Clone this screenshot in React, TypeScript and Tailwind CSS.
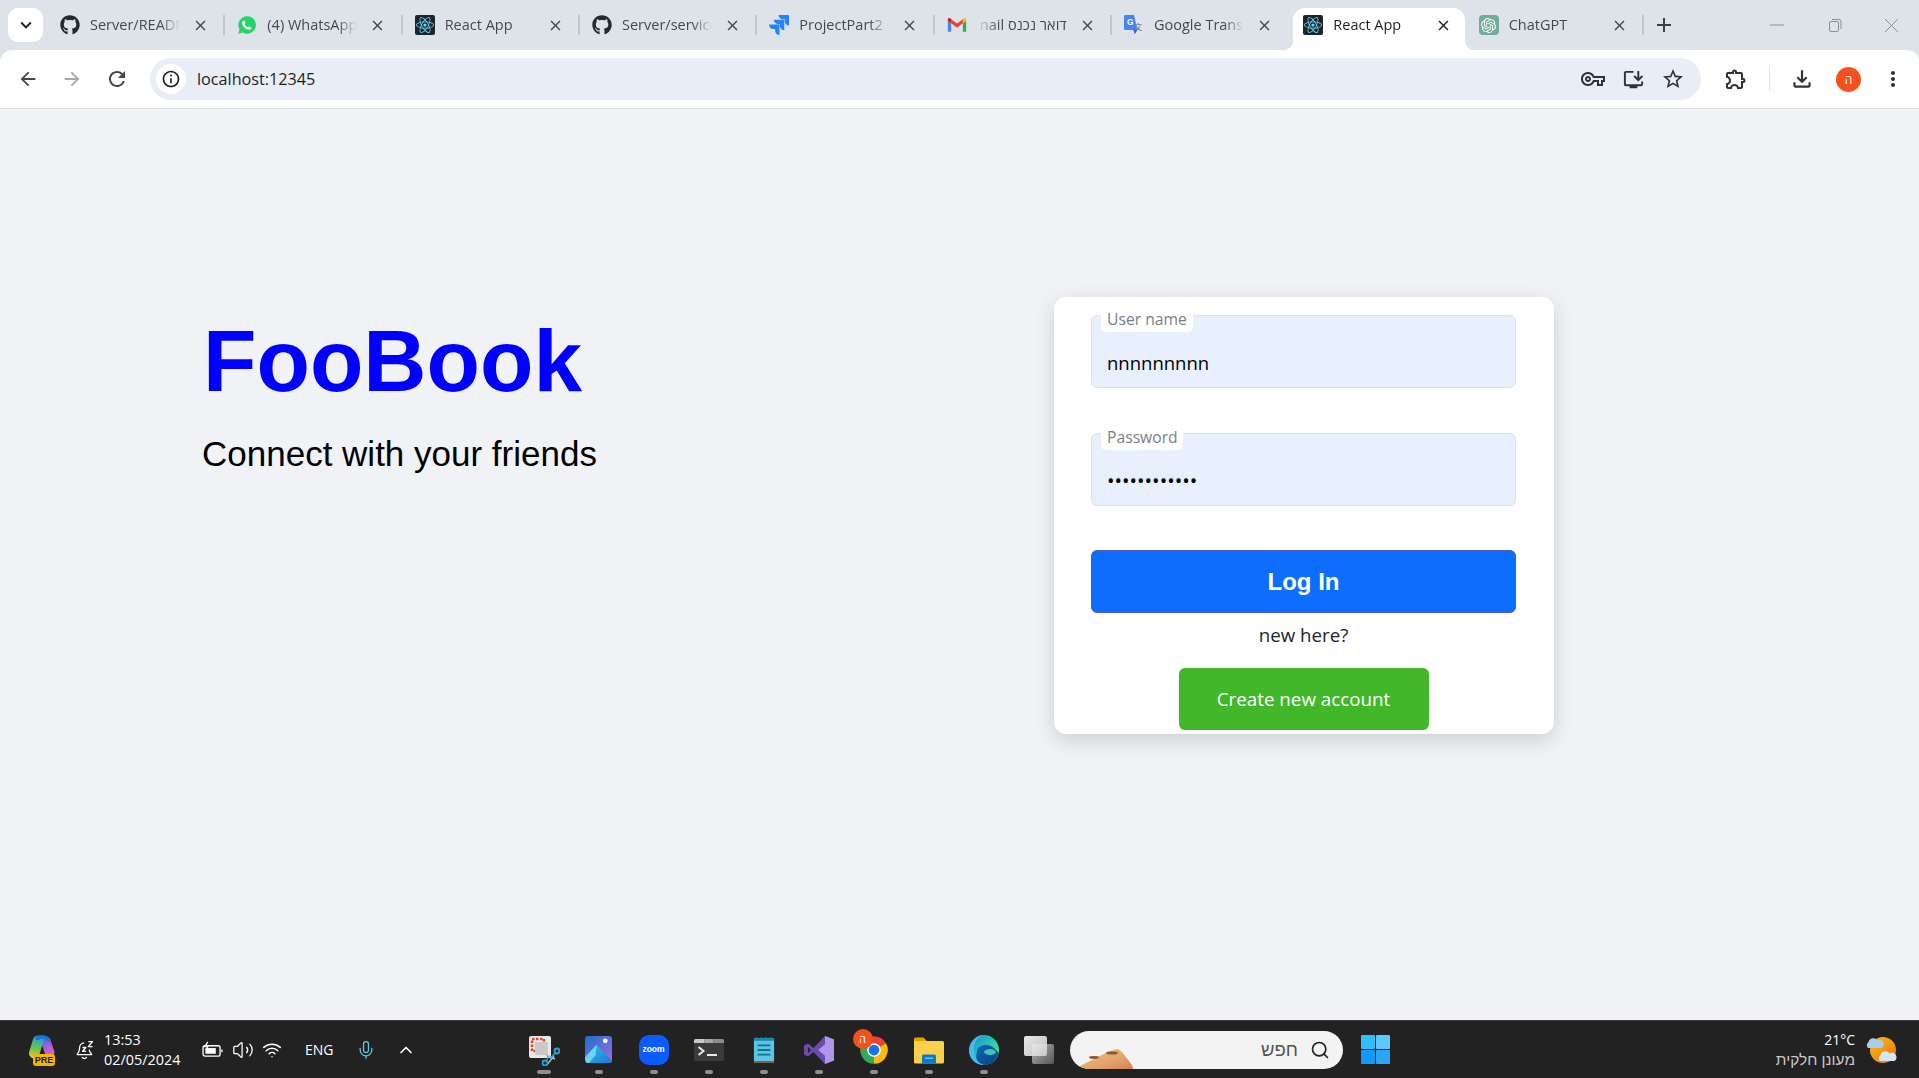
import React from "react";
import { FaGithub, FaReact } from "react-icons/fa";
import { SiJira, SiOpenai } from "react-icons/si";
import {
  MdAdd, MdArrowBack, MdArrowForward, MdClose, MdExpandMore, MdInfoOutline, MdMoreVert, MdOutlineExtension,
  MdOutlineFileDownload, MdOutlineInstallDesktop, MdOutlineVpnKey, MdRefresh, MdStarBorder,
} from "react-icons/md";
import { ChevronUp, Mic, Search, Volume2, Wifi } from "lucide-react";

const Whatsapp = () => (
  <svg viewBox="0 0 24 24" className="w-5 h-5">
    <path fill="#25d366" d="M12 1.5a10.5 10.5 0 0 0-9 15.8L1.5 22.5l5.4-1.4A10.5 10.5 0 1 0 12 1.5z" />
    <path fill="#fff" d="M9 6.7l1.3 3-1.2 1.4c.9 1.7 2.2 3 4 3.9l1.4-1.2 2.9 1.3c0 1.9-1.4 2.8-2.9 2.6-4.4-.5-7.9-4-8.3-8.1C6.100 8 7.200 6.600 9 6.700z" />
  </svg>
);
const ReactFav = () => (
  <div className="w-5 h-5 rounded-[2px] bg-[#20232a] flex items-center justify-center">
    <FaReact className="text-[#61dafb]" size={18} />
  </div>
);
const Gmail = () => (
  <svg viewBox="0 0 24 24" className="w-5 h-5">
    <path fill="#4285f4" d="M1 20h4V10L1 7z" />
    <path fill="#34a853" d="M19 20h4V7l-4 3z" />
    <path fill="#fbbc04" d="M19 5v5l4-3V5.500C23 3.500 20.500 3 19 5z" />
    <path fill="#ea4335" d="M5 10V5l7 5.250L19 5v5l-7 5.250z" />
    <path fill="#c5221f" d="M5 5v5L1 7V5.500C1 3.500 3.500 3 5 5z" />
  </svg>
);
const Translate = () => (
  <svg viewBox="0 0 24 24" className="w-5 h-5">
    <rect x="9" y="6" width="15" height="16" rx="1" fill="#e4e6ea" />
    <text x="12" y="18" fontSize="10" fill="#666" fontFamily="'Noto Sans CJK SC',sans-serif">文</text>
    <path fill="#4285f4" d="M1.500 0H12l4 18H1.500A1.500 1.500 0 0 1 0 16.500v-15A1.500 1.500 0 0 1 1.500 0z" />
    <path fill="#3367d6" d="M11 18l2 5 3-5z" />
    <text x="3.500" y="12.500" fontSize="10" fontWeight="700" fill="#fff" fontFamily="'Liberation Sans',sans-serif">G</text>
  </svg>
);
const ChatFav = () => (
  <div className="w-5 h-5 rounded-[4px] bg-[#74aa9c] flex items-center justify-center">
    <SiOpenai className="text-white" size={15} />
  </div>
);

const tabs: { icon: React.ReactNode; title: string; rtl?: boolean; active?: boolean; noSep?: boolean }[] = [
  { icon: <FaGithub className="text-[#24292f]" size={20} />, title: "Server/README.md at main" },
  { icon: <Whatsapp />, title: "(4) WhatsApp Web" },
  { icon: <ReactFav />, title: "React App" },
  { icon: <FaGithub className="text-[#24292f]" size={20} />, title: "Server/services/users" },
  { icon: <SiJira className="text-[#2684ff]" size={20} />, title: "ProjectPart2 - Jira" },
  { icon: <Gmail />, title: "דואר נכנס nail", rtl: true },
  { icon: <Translate />, title: "Google Translate", noSep: true },
  { icon: <ReactFav />, title: "React App", active: true, noSep: true },
  { icon: <ChatFav />, title: "ChatGPT" },
];

function Tab({ icon, title, rtl, active, noSep }: (typeof tabs)[number]) {
  return (
    <div className="relative w-[177.33px] h-full flex items-center shrink-0">
      {active && (
        <>
          <div className="absolute left-[5px] right-[1px] top-[8px] bottom-0 bg-white rounded-t-[12px]" />
          <div className="absolute left-[-5px] bottom-0 w-[10px] h-[10px] bg-[radial-gradient(circle_at_0_0,transparent_10px,white_10.5px)]" />
          <div className="absolute right-[-9px] bottom-0 w-[10px] h-[10px] bg-[radial-gradient(circle_at_100%_0,transparent_10px,white_10.5px)]" />
        </>
      )}
      <div className={`relative flex items-center w-full ${active ? "pl-[15px]" : "pl-[13px]"}`}>
        <div className="w-5 h-5 flex items-center justify-center shrink-0">{icon}</div>
        <div
          dir={rtl ? "rtl" : "ltr"}
          className={`ml-[10px] w-[90px] overflow-hidden whitespace-nowrap text-[14.5px] leading-5 ${active ? "text-[#1f1f1f]" : "text-[#45494e]"} ${rtl ? "[mask-image:linear-gradient(to_left,black_75%,transparent)]" : "[mask-image:linear-gradient(to_right,black_78%,transparent)]"}`}
        >
          {title}
        </div>
        <MdClose size={17} className={`ml-[12px] shrink-0 ${active ? "text-[#1f1f1f]" : "text-[#45494e]"}`} />
      </div>
      {!noSep && !active && <div className="absolute right-[-1px] top-[15px] h-[20px] w-[2px] bg-[#c2c5cb]" />}
    </div>
  );
}

const ToolBtn = ({ children, className = "" }: { children: React.ReactNode; className?: string }) => (
  <div className={`flex items-center justify-center shrink-0 ${className}`}>{children}</div>
);

function FloatInput({ label, labelW, value, type, textSize }: { label: string; labelW: string; value: string; type: string; textSize: string }) {
  return (
    <div className="relative h-[73px]">
      <input
        readOnly
        type={type}
        value={value}
        className={`w-full h-full rounded-[6px] border border-[#dee2e6] bg-[#e8f0fe] pl-[15px] pr-3 pt-[24px] pb-[3px] ${textSize} text-black outline-none`}
      />
      <div className={`absolute left-[10px] top-[-6px] h-[23px] ${labelW} bg-white rounded-b-[5px] pl-[6px] text-[15.7px] leading-[20px] text-[#7a7f86] whitespace-nowrap`}>
        {label}
      </div>
    </div>
  );
}

const Copilot = () => (
  <div className="relative w-[30px] h-[32px] ml-[26px] shrink-0">
    <svg viewBox="0 0 30 28" className="w-[30px] h-[27px]" fill="none" strokeLinecap="round">
      <defs>
        <linearGradient id="cpa" gradientUnits="userSpaceOnUse" x1="12" y1="2" x2="6" y2="26"><stop offset="0" stopColor="#1aa3e8" /><stop offset=".55" stopColor="#6cc644" /><stop offset="1" stopColor="#f5c542" /></linearGradient>
        <linearGradient id="cpb" gradientUnits="userSpaceOnUse" x1="18" y1="5" x2="28" y2="24"><stop offset="0" stopColor="#6a5fe0" /><stop offset=".5" stopColor="#b45fd6" /><stop offset="1" stopColor="#f06aa0" /></linearGradient>
      </defs>
      <path d="M20 8 L24 19" stroke="url(#cpb)" strokeWidth="10" />
      <path d="M12 7 L8 20" stroke="url(#cpa)" strokeWidth="11" />
      <path d="M11 4.500 C15 2.500 20 2.500 23 6" stroke="#1677d8" strokeWidth="4" />
    </svg>
    <div className="absolute left-[7px] bottom-0 w-[22px] h-[12px] rounded-[3px] bg-[#f5b400] text-[9px] font-bold leading-[12px] text-center text-[#222] font-['Liberation_Sans',sans-serif]">PRE</div>
  </div>
);

const BellZ = () => (
  <svg viewBox="0 0 24 24" className="w-[20px] h-[20px] ml-[19px] shrink-0" fill="none" stroke="#fff" strokeWidth="1.500" strokeLinejoin="round">
    <path d="M11 3.500A6 6 0 0 0 5.500 9.500c0 5-3 7-3 8h17.500c0-1-2.500-2.500-3-6" />
    <path d="M8.500 20.500a3 3 0 0 0 5.500 0" />
    <path d="M9 9h4l-4 4.500h4M16 2h5l-5 6h5" strokeWidth="1.600" />
  </svg>
);

const Snip = () => (
  <svg viewBox="0 0 32 32" className="w-[32px] h-[32px]">
    <rect x="1" y="2" width="22" height="22" rx="2" fill="#e9e9e9" />
    <rect x="4" y="5" width="12" height="12" fill="none" stroke="#d8472b" strokeWidth="2.500" strokeDasharray="2.500 1.500" />
    <rect x="7" y="8" width="13" height="13" fill="#c9c9c9" />
    <path d="M17 33L26 22M17 20l10 5" stroke="#bbb" strokeWidth="1.500" />
    <circle cx="29" cy="17" r="2.500" fill="none" stroke="#2aa3dd" strokeWidth="1.800" />
    <circle cx="17" cy="29" r="2.500" fill="none" stroke="#2aa3dd" strokeWidth="1.800" />
    <path d="M22 25l5-6M19 26l1-4" stroke="#2aa3dd" strokeWidth="1.500" />
  </svg>
);
const Photos = () => (
  <svg viewBox="0 0 28 28" className="w-[27px] h-[27px]">
    <defs>
      <linearGradient id="pha" x1="0" y1="0" x2="1" y2="1"><stop offset="0" stopColor="#1c6fd0" /><stop offset="1" stopColor="#a06be0" /></linearGradient>
      <linearGradient id="phb" x1="0" y1="0" x2="1" y2="1"><stop offset="0" stopColor="#30c6f0" /><stop offset="1" stopColor="#1a78d0" /></linearGradient>
    </defs>
    <rect width="28" height="28" rx="3" fill="url(#pha)" />
    <circle cx="21" cy="5" r="2.500" fill="#fff" />
    <path fill="url(#phb)" d="M0 22 12 9l15 16c-.5 2-1.500 3-3 3H3c-2 0-3-2-3-6z" />
    <path fill="#6ad4f5" d="M0 22 12 9l-1 11-7 8H3c-2 0-3-2-3-6z" />
  </svg>
);
const Zoom = () => (
  <div className="w-[30px] h-[30px] rounded-[10px] bg-[#0b5cff] flex items-center justify-center text-white text-[8.500px] font-bold font-['Liberation_Sans',sans-serif]">zoom</div>
);
const Terminal = () => (
  <svg viewBox="0 0 30 22" className="w-[30px] h-[22px]">
    <rect width="30" height="22" rx="1.500" fill="#3b3b3b" />
    <path d="M1.500 0h9v4H0V1.500A1.500 1.500 0 0 1 1.500 0z" fill="#c8c8c8" />
    <path d="M10.500 0h9v4h-9z" fill="#a8a8a8" />
    <path d="M19.500 0h9A1.500 1.500 0 0 1 30 1.500V4H19.500z" fill="#8d8d8d" />
    <path d="M4.500 8l5 4-5 4" fill="none" stroke="#e8e8e8" strokeWidth="2" />
    <path d="M13 16h10" stroke="#e8e8e8" strokeWidth="2" />
  </svg>
);
const Notepad = () => (
  <svg viewBox="0 0 24 30" className="w-[22px] h-[30px]">
    <rect x="1" y="2" width="22" height="27" rx="1" fill="#5fc3e3" />
    <rect x="1" y="27" width="22" height="2" fill="#8a5a3a" />
    <path d="M1 2h22v3H1z" fill="#1787b5" />
    {[4, 9, 14, 19].map((x) => <circle key={x} cx={x} cy="2.500" r="1.500" fill="#1787b5" />)}
    <path d="M5 10h14M5 15h14M5 20h14" stroke="#0e7196" strokeWidth="2" />
  </svg>
);
const VisualStudio = () => (
  <svg viewBox="0 0 30 30" className="w-[30px] h-[30px]">
    <path fill="#6c4bb0" fillRule="evenodd" d="M21 1 9.500 13 4 8.500 0 10.500v9L4 21.500 9.500 17 21 29l9-3.500v-21zM4 12l3 3-3 3zM21 9l-7 6 7 6z" />
    <path fill="#b196ea" d="M21 1l9 3.500v21L21 29zM21 9l-7 6 7 6z" fillRule="evenodd" />
  </svg>
);
const Chrome = () => (
  <div className="relative w-[30px] h-[30px]">
    <svg viewBox="0 0 24 24" className="w-[30px] h-[30px]">
      <path fill="#ea4335" d="M12 12 2.470 6.500A11 11 0 0 1 21.530 6.500Z" />
      <path fill="#fbbc04" d="M12 12 21.530 6.500A11 11 0 0 1 12 23Z" />
      <path fill="#34a853" d="M12 12 12 23A11 11 0 0 1 2.470 6.500Z" />
      <circle cx="12" cy="12" r="5.500" fill="#fff" />
      <circle cx="12" cy="12" r="4.300" fill="#1a73e8" />
    </svg>
    <div className="absolute left-[-6px] top-[-6px] w-[20px] h-[20px] rounded-full bg-[#f4511e] text-white text-[11px] leading-[20px] text-center">ה</div>
  </div>
);
const Folder = () => (
  <svg viewBox="0 0 30 28" className="w-[30px] h-[28px]">
    <path fill="#e0a400" d="M0 3a1.500 1.500 0 0 1 1.500-1.500h8L13 5h-13z" />
    <path fill="#fbd04c" d="M0 5h28.500A1.500 1.500 0 0 1 30 6.500V26a1.500 1.500 0 0 1-1.500 1.500h-27A1.500 1.500 0 0 1 0 26z" />
    <path fill="#0f78c8" d="M8 27.500V20a1.500 1.500 0 0 1 1.500-1.500h11A1.500 1.500 0 0 1 22 20v7.500z" />
    <path fill="#66c0f0" d="M11 21.500h8v1.500h-8z" />
  </svg>
);
const Edge = () => (
  <svg viewBox="0 0 30 30" className="w-[30px] h-[30px]">
    <defs>
      <linearGradient id="eda" x1="0" y1="0" x2="1" y2="1"><stop offset="0" stopColor="#0c8ed6" /><stop offset=".55" stopColor="#30c9b0" /><stop offset="1" stopColor="#6ee860" /></linearGradient>
      <linearGradient id="edb" x1="0" y1="0" x2="1" y2="1"><stop offset="0" stopColor="#0f64b8" /><stop offset="1" stopColor="#0b3f86" /></linearGradient>
    </defs>
    <circle cx="15" cy="15" r="15" fill="url(#eda)" />
    <path fill="url(#edb)" d="M8 17c0-5 5-7 9-7 5 0 9 3 12.500 8C28 25 22 30 15 30c-7 0-9-7-7-13z" />
    <path fill="#49b9e8" d="M0 15C1 6 8 0 15 0c-5 1-11 6-10 17 .5 6 4 11 10 13C7 30 0 24 0 15z" />
    <ellipse cx="21" cy="17" rx="6" ry="3" fill="#38c8b8" />
  </svg>
);
const TaskView = () => (
  <div className="relative w-[30px] h-[28px]">
    <div className="absolute right-0 bottom-0 w-[22px] h-[20px] rounded-[2px] bg-[linear-gradient(135deg,#b5b5b5,#555)]" />
    <div className="absolute left-0 top-0 w-[23px] h-[20px] rounded-[2px] bg-[linear-gradient(135deg,#fff,#cfcfcf)] opacity-90" />
  </div>
);

function TaskIcon({ children, pill = true, wide }: { children: React.ReactNode; pill?: boolean; wide?: boolean }) {
  return (
    <div className="relative w-[55px] h-full flex items-center justify-center shrink-0">
      {children}
      {pill && <div className={`absolute bottom-[4px] h-[4px] rounded-full bg-[#8e8e8e] ${wide ? "w-[14px]" : "w-[8px]"}`} />}
    </div>
  );
}

const Sand = () => (
  <svg viewBox="0 0 56 22" className="absolute left-[8px] bottom-0 w-[56px] h-[22px]">
    <defs><linearGradient id="snd" x1="0" y1="0" x2="1" y2="1"><stop offset="0" stopColor="#f3c27b" /><stop offset=".6" stopColor="#e3a46c" /><stop offset="1" stopColor="#d9805a" /></linearGradient></defs>
    <path fill="url(#snd)" d="M0 20c6-3 12-6 18-9 6-3 14-8 22-9 4 2 8 8 14 16l1 4H4z" />
    <ellipse cx="16" cy="10.500" rx="5" ry="1.400" fill="#8b5a32" />
    <ellipse cx="34" cy="6" rx="6" ry="1.600" fill="#8b5a32" />
  </svg>
);

const WinLogo = () => (
  <svg viewBox="0 0 29 29" className="w-[29px] h-[29px]">
    <rect x="0" y="0" width="14" height="14" rx="1" fill="#2fc0fb" />
    <rect x="15" y="0" width="14" height="14" rx="1" fill="#5ec9ff" />
    <rect x="0" y="15" width="14" height="14" rx="1" fill="#0f9bf5" />
    <rect x="15" y="15" width="14" height="14" rx="1" fill="#2aa5f7" />
  </svg>
);

const Weather = () => (
  <svg viewBox="0 0 32 30" className="w-[32px] h-[30px] ml-[10px] shrink-0">
    <defs><linearGradient id="sun" x1="0" y1="0" x2="1" y2="1"><stop offset="0" stopColor="#fbbc1c" /><stop offset="1" stopColor="#e8730e" /></linearGradient></defs>
    <circle cx="18" cy="15" r="13" fill="url(#sun)" />
    <path fill="#a9cdee" d="M3 13a4 4 0 0 1 .5-6 5 5 0 0 1 9-1.500 4 4 0 0 1 4 7.500z" />
    <path fill="#d2e5f7" d="M15 26a4 4 0 0 1 .5-6 5 5 0 0 1 9-1.500 4 4 0 0 1 5 7.500z" />
  </svg>
);

export default function App() {
  return (
    <div className="w-[1919px] h-[1078px] flex flex-col overflow-hidden font-['Open_Sans','Liberation_Sans',sans-serif]">
      {/* tab strip */}
      <div className="h-[50px] bg-[#dee3ea] flex items-stretch shrink-0">
        <div className="ml-[8px] mt-[8px] w-[35px] h-[34px] rounded-[10px] bg-white flex items-center justify-center shrink-0">
          <MdExpandMore size={22} className="text-[#1f1f1f]" />
        </div>
        <div className="w-[4px] shrink-0" />
        {tabs.map((t, i) => <Tab key={i} {...t} />)}
        <div className="ml-[9px] flex items-center"><MdAdd size={24} className="text-[#3c4043]" /></div>
        <div className="ml-auto flex items-center text-[#8b8f94]">
          <div className="w-[56px] flex justify-center mr-[2px]">
            <svg width="14" height="14" viewBox="0 0 14 14"><path d="M0 7h14" stroke="currentColor" /></svg>
          </div>
          <div className="w-[56px] flex justify-center">
            <svg width="14" height="14" viewBox="0 0 14 14" fill="none" stroke="currentColor"><rect x="1.500" y="3.500" width="9" height="10" rx="1.500" /><path d="M4 1.500h7a2 2 0 0 1 2 2V11" /></svg>
          </div>
          <div className="w-[56px] flex justify-center">
            <svg width="15" height="15" viewBox="0 0 15 15"><path d="M1 1l13 13M14 1L1 14" stroke="currentColor" /></svg>
          </div>
        </div>
      </div>

      {/* toolbar */}
      <div className="h-[59px] bg-[#dee3ea] shrink-0">
        <div className="h-full bg-white rounded-t-[12px] border-b border-[#dfe1e5] flex items-center text-[#474747]">
          <ToolBtn className="w-[24px] ml-[16px]"><MdArrowBack size={22} /></ToolBtn>
          <ToolBtn className="w-[24px] ml-[20px] text-[#a8a8a8]"><MdArrowForward size={22} /></ToolBtn>
          <ToolBtn className="w-[24px] ml-[21px]"><MdRefresh size={24} /></ToolBtn>
          <div className="ml-[21px] w-[1551px] h-[42px] rounded-full bg-[#e9edf6] flex items-center shrink-0">
            <div className="ml-[6px] w-[30px] h-[30px] rounded-full bg-white flex items-center justify-center text-[#1f1f1f]"><MdInfoOutline size={20} /></div>
            <span className="ml-[11px] text-[16.2px] text-[#1f1f1f] leading-5">localhost:12345</span>
            <div className="ml-auto flex items-center text-[#303134]">
              <ToolBtn className="w-[40px]"><MdOutlineVpnKey size={24} /></ToolBtn>
              <ToolBtn className="w-[40px]"><MdOutlineInstallDesktop size={23} /></ToolBtn>
              <ToolBtn className="w-[40px] mr-[8px]"><MdStarBorder size={24} /></ToolBtn>
            </div>
          </div>
          <ToolBtn className="w-[40px] ml-[15px] text-[#303134]"><MdOutlineExtension size={24} /></ToolBtn>
          <div className="ml-[13px] w-[1px] h-[24px] bg-[#d3e3fd]" />
          <ToolBtn className="w-[40px] ml-[12px] text-[#303134]"><MdOutlineFileDownload size={26} /></ToolBtn>
          <div className="ml-[14px] w-[25px] h-[25px] rounded-full bg-[#f4511e] text-white text-[12px] leading-[25px] text-center shrink-0">ה</div>
          <ToolBtn className="w-[24px] ml-[20px] text-[#303134]"><MdMoreVert size={24} /></ToolBtn>
        </div>
      </div>

      {/* page */}
      <div className="flex-1 bg-[#f0f2f5] flex items-start">
        <div className="w-[1054px] pl-[202px] pt-[209px] shrink-0 font-['Liberation_Sans',sans-serif]">
          <h1 className="ml-[1px] text-[87.5px] leading-none font-bold text-[#0000ff]">FooBook</h1>
          <p className="mt-[30.5px] text-[35px] leading-none text-black">Connect with your friends</p>
        </div>
        <div className="mt-[188px] w-[500px] h-[437px] bg-white rounded-[12px] shadow-[0_6px_20px_rgba(0,0,0,0.15)] pl-[37px] pr-[38px] pt-[18px] shrink-0">
          <FloatInput label="User name" labelW="w-[92px]" value="nnnnnnnnn" type="text" textSize="text-[18.5px]" />
          <div className="h-[45px]" />
          <FloatInput label="Password" labelW="w-[82px]" value="nnnnnnnnnnnn" type="password" textSize="text-[20px]" />
          <div className="h-[44px]" />
          <button className="w-full h-[63px] rounded-[6px] bg-[#0d6efd] border border-[#4a57d8] text-white text-[24px] font-bold font-['Liberation_Sans',sans-serif]">Log In</button>
          <div className="h-[55px] pb-[10px] flex items-center justify-center text-[18.7px] text-[#212529]">new here?</div>
          <div className="flex justify-center">
            <button className="w-[250px] h-[62px] rounded-[6px] bg-[#42b72a] text-white text-[18.8px]">Create new account</button>
          </div>
        </div>
      </div>

      {/* taskbar */}
      <div className="h-[58px] bg-[#222222] border-t border-[#3a3a3a] flex items-center shrink-0 text-white">
        <div className="w-[516px] h-full flex items-center shrink-0">
          <Copilot />
          <BellZ />
          <div className="ml-[9px] text-[14.4px] leading-[20px] w-[84px] shrink-0">
            <div>13:53</div>
            <div>02/05/2024</div>
          </div>
          <svg viewBox="0 0 22 18" className="w-[21px] h-[17px] ml-[14px] shrink-0" fill="none" stroke="#fff" strokeWidth="1.400">
            <rect x="1" y="5" width="18" height="11" rx="2" />
            <rect x="3.500" y="7.500" width="11" height="6" fill="#fff" stroke="none" />
            <path d="M21 9v3" />
            <path d="M6 1L3 6h3l-2 4" />
          </svg>
          <Volume2 size={22} strokeWidth={1.400} className="ml-[9px] shrink-0" />
          <Wifi size={20} strokeWidth={1.800} className="ml-[8px] shrink-0" />
          <span className="ml-[23px] text-[14px] w-[30px] shrink-0">ENG</span>
          <Mic size={20} strokeWidth={1.500} className="ml-[21px] text-[#6cc5e5] shrink-0" />
          <ChevronUp size={20} strokeWidth={2} className="ml-[20px] shrink-0" />
        </div>
        <TaskIcon wide><Snip /></TaskIcon>
        <TaskIcon><Photos /></TaskIcon>
        <TaskIcon><Zoom /></TaskIcon>
        <TaskIcon><Terminal /></TaskIcon>
        <TaskIcon><Notepad /></TaskIcon>
        <TaskIcon><VisualStudio /></TaskIcon>
        <TaskIcon><Chrome /></TaskIcon>
        <TaskIcon><Folder /></TaskIcon>
        <TaskIcon><Edge /></TaskIcon>
        <TaskIcon pill={false}><TaskView /></TaskIcon>
        <div className="relative ml-[4px] w-[273px] h-[38px] rounded-full bg-[#f3f3f3] overflow-hidden flex items-center justify-end shrink-0">
          <Sand />
          <span dir="rtl" className="text-[#555] text-[18.5px] mr-[12px] font-['Liberation_Sans',sans-serif]">חפש</span>
          <Search size={20} strokeWidth={2} className="text-[#222] mr-[13px]" />
        </div>
        <div className="ml-[18px]"><WinLogo /></div>
        <div className="ml-auto flex items-center mr-[22px]">
          <div className="text-right leading-[20px]">
            <div className="text-[14px]">21°C</div>
            <div dir="rtl" className="text-[15.4px] text-[#c9c9c9] font-['Liberation_Sans',sans-serif]">מעונן חלקית</div>
          </div>
          <Weather />
        </div>
      </div>
    </div>
  );
}
